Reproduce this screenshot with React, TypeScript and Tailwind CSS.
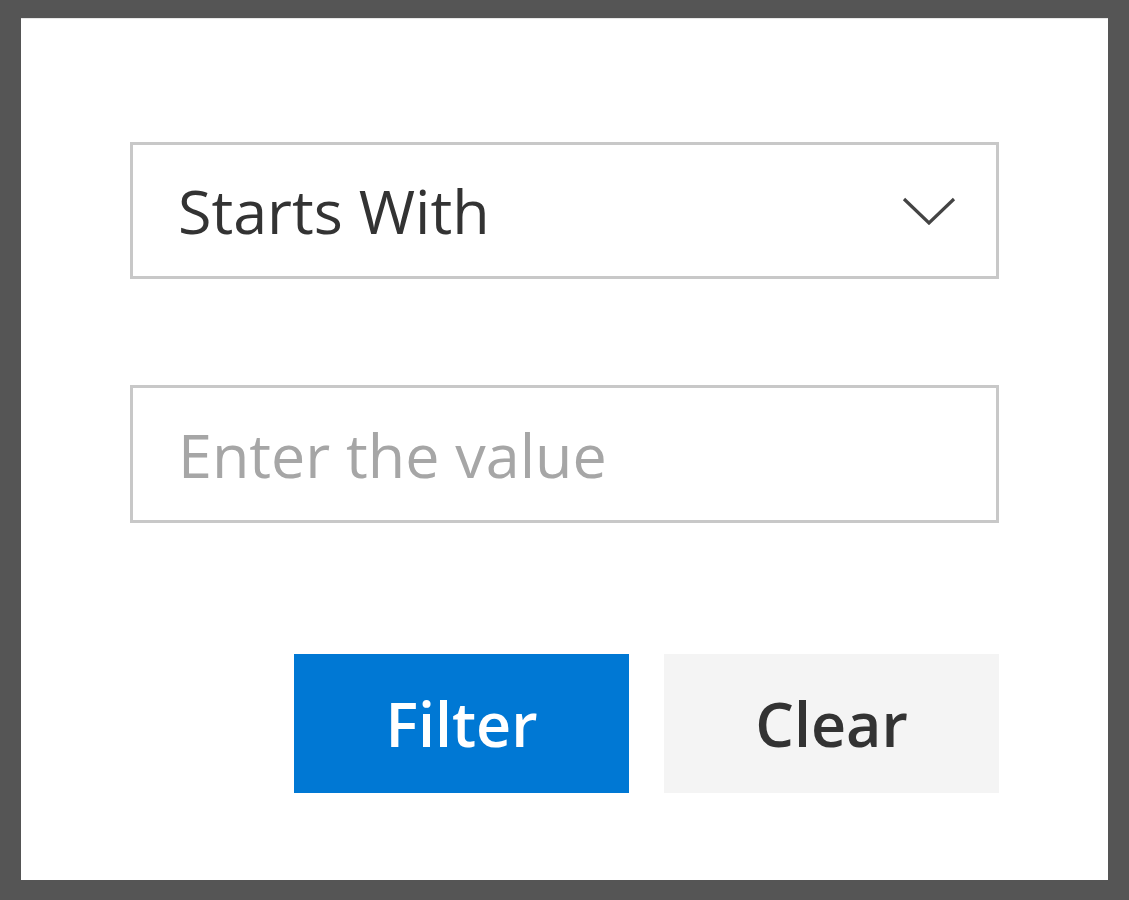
import React from 'react'

const ChevronDown: React.FC = () => (
  <svg width="54" height="28" viewBox="0 0 54 28" fill="none" className="shrink-0">
    <path d="M2 2 L27 26 L52 2" stroke="#444444" strokeWidth="3.2" strokeLinejoin="miter" />
  </svg>
)

export default function App() {
  return (
    <div
      className="h-[900px] w-[1129px] bg-[#555555] pt-[18px] pb-[20px] px-[21px]"
      style={{ fontFamily: '"Open Sans", "Noto Sans", sans-serif' }}
    >
      <div className="h-full bg-white border-t border-[#e6e6e6] pl-[109px] pt-[123px]">
        <div className="w-[869px]">
          <div className="flex items-center justify-between h-[137px] border-[3px] border-[#c8c8c8] pl-[45px] pr-[40px]">
            <span className="text-[61px] leading-none text-[#333333]">Starts With</span>
            <ChevronDown />
          </div>

          <div className="mt-[106px] flex items-center h-[138px] border-[3px] border-[#c8c8c8] pl-[45px]">
            <span className="text-[61px] leading-none text-[#a6a6a6]">Enter the value</span>
          </div>

          <div className="mt-[131px] flex justify-end gap-[35px]">
            <button
              type="button"
              className="w-[335px] h-[139px] bg-[#0078d4] text-white text-[61px] font-semibold leading-none"
            >
              Filter
            </button>
            <button
              type="button"
              className="w-[335px] h-[139px] bg-[#f4f4f4] text-[#333333] text-[61px] font-semibold leading-none"
            >
              Clear
            </button>
          </div>
        </div>
      </div>
    </div>
  )
}
